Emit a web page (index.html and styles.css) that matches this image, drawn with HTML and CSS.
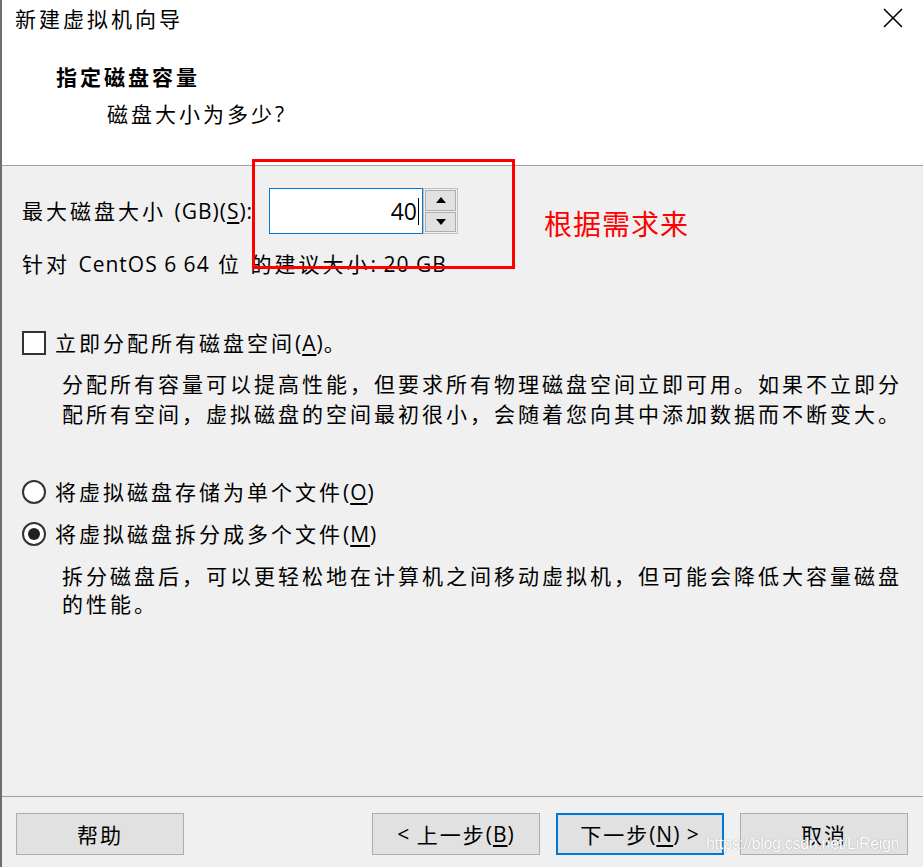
FILE: index.html
```html
<!DOCTYPE html>
<html lang="zh-CN">
<head>
<meta charset="utf-8">
<title>新建虚拟机向导</title>
<link rel="stylesheet" href="styles.css">
</head>
<body>
<div class="window">
  <div class="header">
    <div class="titlebar">
      <span class="title">新建虚拟机向导</span>
      <svg class="close" width="22" height="22" viewBox="0 0 22 22"><path d="M2 2 L20 20 M20 2 L2 20" stroke="#000" stroke-width="1.6" fill="none"/></svg>
    </div>
    <div class="head-text">
      <div class="h1">指定磁盘容量</div>
      <div class="sub">磁盘大小为多少?</div>
    </div>
  </div>

  <div class="content">
    <div class="size-row">
      <label class="size-label">最大磁盘大小 <span class="lat">(GB)(<u>S</u>):</span></label>
      <div class="spin-input">
        <div class="input"><span class="val">40</span><span class="caret"></span></div>
        <div class="spin">
          <div class="spin-btn"><svg width="10" height="6" viewBox="0 0 10 6"><path d="M5 0 L10 6 L0 6 Z" fill="#000"/></svg></div>
          <div class="spin-btn"><svg width="10" height="6" viewBox="0 0 10 6"><path d="M0 0 L10 0 L5 6 Z" fill="#000"/></svg></div>
        </div>
      </div>
    </div>
    <div class="recommend">针对 <span class="lat">CentOS 6 64</span> 位 的建议大小<span class="lat">: 20 GB</span></div>

    <div class="opt check-row"><span class="checkbox"></span><span>立即分配所有磁盘空间<span class="lat">(<u>A</u>)</span>。</span></div>
    <div class="desc desc1">分配所有容量可以提高性能，但要求所有物理磁盘空间立即可用。如果不立即分配所有空间，虚拟磁盘的空间最初很小，会随着您向其中添加数据而不断变大。</div>

    <div class="opt radio-row r1"><span class="radio"></span><span>将虚拟磁盘存储为单个文件<span class="lat">(<u>O</u>)</span></span></div>
    <div class="opt radio-row r2"><span class="radio on"></span><span>将虚拟磁盘拆分成多个文件<span class="lat">(<u>M</u>)</span></span></div>
    <div class="desc desc2">拆分磁盘后，可以更轻松地在计算机之间移动虚拟机，但可能会降低大容量磁盘的性能。</div>
  </div>

  <div class="footer">
    <button class="btn">帮助</button>
    <div class="spacer"></div>
    <button class="btn"><span class="lat">&lt;&nbsp;</span>上一步<span class="lat">(<u>B</u>)</span></button>
    <button class="btn primary">下一步<span class="lat">(<u>N</u>)&nbsp;&gt;</span></button>
    <button class="btn">取消</button>
  </div>

  <div class="annot-box"></div>
  <div class="annot-text">根据需求来</div>
  <div class="watermark">https://blog.csdn.net/LiReign</div>
</div>
</body>
</html>
```
FILE: styles.css
```css
* { box-sizing: border-box; }
html, body { margin: 0; padding: 0; }
body {
  width: 923px;
  height: 867px;
  overflow: hidden;
  background: #f0f0f0;
  font-family: "Open Sans", "Noto Sans CJK SC", sans-serif;
  color: #000;
}
.window {
  position: relative;
  width: 923px;
  height: 867px;
  border-left: 2px solid #6e6e6e;
  display: flex;
  flex-direction: column;
  background: #f0f0f0;
}
.header {
  background: #fff;
  height: 166px;
  border-bottom: 1px solid #a0a0a0;
}
.titlebar {
  height: 38px;
  display: flex;
  align-items: center;
  justify-content: space-between;
  padding-left: 13px;
  padding-right: 19px;
}
.title {
  font-size: 21px;
  letter-spacing: 3px;
  line-height: 38px;
}
.close { display: block; margin-top: -2px; }
.head-text {
  padding-top: 24px;
  padding-left: 54px;
}
.h1 {
  font-size: 21px;
  font-weight: bold;
  letter-spacing: 3px;
  line-height: 30px;
}
.sub {
  margin-top: 7px;
  padding-left: 51px;
  font-size: 21px;
  letter-spacing: 3px;
  line-height: 30px;
}
.content {
  flex: 1;
  padding-left: 20px;
  font-size: 21px;
  letter-spacing: 3px;
}
.lat { letter-spacing: 1px; }
u { text-underline-offset: 3px; }
.size-row {
  margin-top: 22px;
  height: 46px;
  display: flex;
  align-items: center;
}
.size-label {
  flex: 0 0 247px;
  white-space: nowrap;
  line-height: 30px;
}
.spin-input { display: flex; height: 46px; }
.input {
  width: 154px;
  height: 46px;
  background: #fff;
  border: 1px solid #0078d7;
  display: flex;
  align-items: center;
  justify-content: flex-end;
  padding-right: 3px;
}
.val {
  font-size: 23px;
  letter-spacing: 0;
  line-height: 28px;
}
.caret {
  width: 1px;
  height: 27px;
  background: #000;
  margin-left: 1px;
}
.spin {
  width: 35px;
  height: 46px;
  border: 1px solid #c0c0c0;
  background: #f0f0f0;
  padding: 1px;
  display: flex;
  flex-direction: column;
  gap: 1px;
}
.spin-btn {
  flex: 1;
  background: #e1e1e1;
  border: 1px solid #adadad;
  display: flex;
  align-items: center;
  justify-content: center;
}
.spin-btn svg { display: block; }
.recommend {
  margin-top: 15px;
  line-height: 30px;
  white-space: nowrap;
}
.opt {
  display: flex;
  align-items: center;
  line-height: 30px;
  white-space: nowrap;
}
.check-row { margin-top: 49px; }
.checkbox {
  width: 24px;
  height: 24px;
  border: 2px solid #333;
  background: #fff;
  margin-right: 9px;
  flex: 0 0 auto;
}
.radio {
  width: 24px;
  height: 24px;
  border: 2px solid #333;
  border-radius: 50%;
  background: #fff;
  margin-right: 9px;
  flex: 0 0 auto;
  display: flex;
  align-items: center;
  justify-content: center;
}
.radio.on::after {
  content: "";
  width: 12px;
  height: 12px;
  border-radius: 50%;
  background: #222;
}
.desc {
  padding-left: 40px;
  width: 900px;
}
.desc1 {
  margin-top: 11px;
  line-height: 30px;
}
.r1 { margin-top: 48px; }
.r2 { margin-top: 12px; }
.desc2 {
  margin-top: 13px;
  line-height: 28px;
}
.footer {
  height: 71px;
  border-top: 1px solid #a0a0a0;
  display: flex;
  align-items: flex-start;
  gap: 16px;
  padding: 16px 0 0 14px;
}
.spacer { width: 156px; }
.btn {
  width: 168px;
  height: 42px;
  background: #e1e1e1;
  border: 1px solid #adadad;
  font-family: "Open Sans", "Noto Sans CJK SC", sans-serif;
  font-size: 21px;
  letter-spacing: 2px;
  color: #000;
  padding: 0;
  display: flex;
  align-items: center;
  justify-content: center;
  white-space: nowrap;
}
.btn.primary { border: 2px solid #0078d7; }
.annot-box {
  position: absolute;
  left: 250px;
  top: 159px;
  width: 263px;
  height: 110px;
  border: 3px solid #ff0000;
}
.annot-text {
  position: absolute;
  left: 542px;
  top: 206px;
  font-size: 28px;
  line-height: 36px;
  color: #ff0000;
  letter-spacing: 1px;
}
.watermark {
  position: absolute;
  left: 704px;
  top: 835px;
  font-family: "Liberation Sans", sans-serif;
  font-size: 16px;
  letter-spacing: -0.3px;
  color: #ffffff;
  text-shadow: 0 0 1px #b0b0b0, 0 0 1px #b0b0b0;
}
```
